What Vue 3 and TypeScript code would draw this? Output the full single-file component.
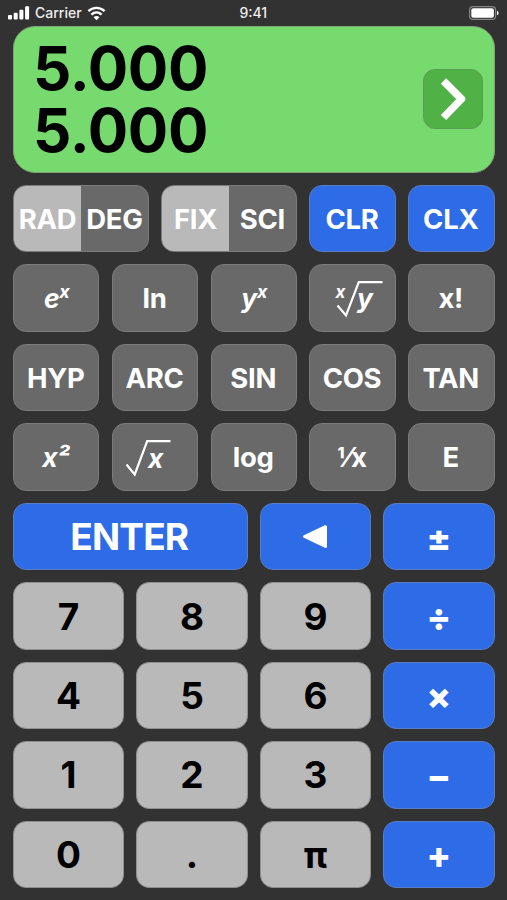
<script setup lang="ts">
import { ref } from 'vue'

type Kind = 'text' | 'power' | 'root' | 'nthroot' | 'back'
interface Key {
  label: string
  tone: 'dark' | 'blue' | 'light'
  kind?: Kind
  sup?: string
  cls?: string
}

const angle = ref('RAD')
const notation = ref('FIX')
const stack = ref(['5.000', '5.000'])

const functionKeys: Key[] = [
  { label: 'e', sup: 'x', tone: 'dark', kind: 'power' },
  { label: 'ln', tone: 'dark' },
  { label: 'y', sup: 'x', tone: 'dark', kind: 'power' },
  { label: 'y', sup: 'x', tone: 'dark', kind: 'nthroot' },
  { label: 'x!', tone: 'dark' },
  { label: 'HYP', tone: 'dark' },
  { label: 'ARC', tone: 'dark' },
  { label: 'SIN', tone: 'dark' },
  { label: 'COS', tone: 'dark' },
  { label: 'TAN', tone: 'dark' },
  { label: 'x²', tone: 'dark', cls: 'square' },
  { label: 'x', tone: 'dark', kind: 'root' },
  { label: 'log', tone: 'dark' },
  { label: '⅟x', tone: 'dark', cls: 'frac' },
  { label: 'E', tone: 'dark' },
]

const numberKeys: Key[] = [
  { label: 'ENTER', tone: 'blue', cls: 'enter' },
  { label: '', tone: 'blue', kind: 'back' },
  { label: '±', tone: 'blue', cls: 'op' },
  { label: '7', tone: 'light' },
  { label: '8', tone: 'light' },
  { label: '9', tone: 'light' },
  { label: '÷', tone: 'blue', cls: 'op' },
  { label: '4', tone: 'light' },
  { label: '5', tone: 'light' },
  { label: '6', tone: 'light' },
  { label: '×', tone: 'blue', cls: 'op' },
  { label: '1', tone: 'light' },
  { label: '2', tone: 'light' },
  { label: '3', tone: 'light' },
  { label: '−', tone: 'blue', cls: 'op' },
  { label: '0', tone: 'light' },
  { label: '.', tone: 'light' },
  { label: 'π', tone: 'light' },
  { label: '+', tone: 'blue', cls: 'op' },
]
</script>

<template>
  <main class="screen">
    <header class="status">
      <div class="carrier">
        <svg class="signal" width="22" height="14" viewBox="0 0 22 14">
          <rect x="0" y="9" width="4" height="4.5" rx="1" />
          <rect x="5.7" y="6.8" width="4" height="6.7" rx="1" />
          <rect x="11.4" y="3.8" width="4" height="9.7" rx="1" />
          <rect x="17.1" y="0.3" width="4" height="13.2" rx="1" />
        </svg>
        <span>Carrier</span>
        <svg class="wifi" width="19" height="15" viewBox="0 0 19 15">
          <path d="M1.400 5.200C6 .8 13 .8 17.600 5.200M4.400 8.600c3-2.800 7.200-2.800 10.200 0" />
          <path class="dot" d="M6.500 11.200c1.700-1.700 4.300-1.700 6 0l-3 3.100z" />
        </svg>
      </div>
      <span class="time">9:41</span>
      <svg class="battery" width="30" height="14" viewBox="0 0 30 14">
        <rect x=".6" y=".6" width="26" height="12.800" rx="3.500" />
        <rect class="charge" x="2.300" y="2.200" width="22.600" height="9.600" rx="2" />
        <path class="tip" d="M28 4.700c2 .8 2 3.800 0 4.600z" />
      </svg>
    </header>

    <section class="display">
      <div class="stack">
        <div v-for="(value, i) in stack" :key="i">{{ value }}</div>
      </div>
      <button class="more" aria-label="More">
        <svg width="58" height="58" viewBox="0 0 58 58">
          <path d="M19.500 11L37.500 29L19.500 47.500" />
        </svg>
      </button>
    </section>

    <section class="modes">
      <div class="toggle">
        <button v-for="m in ['RAD', 'DEG']" :key="m" :class="{ on: angle === m }" @click="angle = m">{{ m }}</button>
      </div>
      <div class="toggle">
        <button v-for="m in ['FIX', 'SCI']" :key="m" :class="{ on: notation === m }" @click="notation = m">{{ m }}</button>
      </div>
      <button class="key blue">CLR</button>
      <button class="key blue">CLX</button>
    </section>

    <section class="functions">
      <button v-for="(k, i) in functionKeys" :key="i" class="key" :class="[k.tone, k.cls]">
        <span v-if="k.kind === 'power'" class="power">{{ k.label }}<span class="sup">{{ k.sup }}</span></span>
        <svg v-else-if="k.kind === 'root'" class="radical" width="86" height="67" viewBox="0 0 86 67">
          <path d="M14.500 40.500L22.700 50.500L35.200 17.200H58.500" />
          <text x="36" y="43.500">{{ k.label }}</text>
        </svg>
        <svg v-else-if="k.kind === 'nthroot'" class="radical" width="86" height="67" viewBox="0 0 86 67">
          <path d="M27.500 40.500L36 50.500L48.800 17.200H72.500" />
          <text x="47" y="43">{{ k.label }}</text>
          <text class="small" x="25.500" y="33">{{ k.sup }}</text>
        </svg>
        <span v-else>{{ k.label }}</span>
      </button>
    </section>

    <section class="numbers">
      <button v-for="(k, i) in numberKeys" :key="i" class="key" :class="[k.tone, k.cls]">
        <svg v-if="k.kind === 'back'" width="28" height="28" viewBox="0 0 28 28">
          <path class="triangle" d="M3.500 13.500L24.500 3.700V23.500Z" />
        </svg>
        <span v-else>{{ k.label }}</span>
      </button>
    </section>
  </main>
</template>

<style>
body {
  background: #323232;
}
</style>

<style scoped>
.screen {
  box-sizing: border-box;
  width: 507px;
  height: 900px;
  overflow: hidden;
  padding: 0 12.500px 0 13px;
  display: flex;
  flex-direction: column;
  gap: 12.300px;
  background: #323232;
  color: #fff;
  font-family: Inter, "Liberation Sans", sans-serif;
  font-weight: 700;
}

button {
  border: 0;
  margin: 0;
  padding: 0;
  background: none;
  color: inherit;
  font: inherit;
  letter-spacing: inherit;
}

.status {
  height: 26px;
  margin: 0 -4px -12.800px -5px;
  display: grid;
  grid-template-columns: 1fr auto 1fr;
  align-items: center;
  font-size: 14px;
  font-weight: 500;
  color: #eee;
}

.carrier {
  display: flex;
  align-items: center;
  gap: 5px;
}

.status span {
  position: relative;
  top: -0.500px;
}

.signal,
.charge,
.tip,
.dot {
  fill: #fff;
}

.wifi path:first-child {
  fill: none;
  stroke: #fff;
  stroke-width: 2.400;
}

.battery {
  justify-self: end;
}

.battery rect:first-child {
  fill: none;
  stroke: #858585;
  stroke-width: 1.200;
}

.display {
  box-sizing: border-box;
  flex: none;
  height: 147.200px;
  border: 1px solid #7da377;
  border-radius: 22px;
  background: #77da6e;
  display: flex;
  align-items: center;
  justify-content: space-between;
  padding: 0 11px 0 19px;
}

.stack {
  color: #000;
  font-size: 60px;
  font-weight: 650;
  line-height: 62px;
  letter-spacing: -0.300px;
}

.more {
  box-sizing: border-box;
  width: 60px;
  height: 60px;
  border: 1px solid #5c9d54;
  border-radius: 12px;
  background: #50b146;
}

.more svg {
  display: block;
}

.more path {
  fill: none;
  stroke: #fff;
  stroke-width: 7.500;
  stroke-linejoin: round;
}

.modes {
  flex: none;
  display: grid;
  grid-template-columns: 135.800px 135.800px 1fr 1fr;
  height: 67.200px;
  gap: 12.300px;
  font-size: 27.500px;
  letter-spacing: -0.300px;
}

.toggle,
.key {
  box-sizing: border-box;
  border: 1px solid #7b7b7b;
  border-radius: 13px;
  background: #696969;
  overflow: hidden;
}

.toggle {
  display: grid;
  grid-template-columns: 1fr 1fr;
}

.toggle .on {
  background: #b9b9b9;
}

.key {
  display: flex;
  align-items: center;
  justify-content: center;
}

.modes .key,
.functions .key {
  padding-right: 1px;
}

.key.blue {
  background: #2d6be7;
  border-color: #5a7cc0;
}

.key.light {
  background: #b9b9b9;
  border-color: #8e8e8e;
  color: #000;
}

.functions,
.numbers {
  flex: none;
  display: grid;
  grid-auto-rows: 67.200px;
  gap: 12.300px;
}

.functions {
  grid-template-columns: repeat(5, 1fr);
  font-size: 27.500px;
  letter-spacing: -0.300px;
}

.numbers {
  grid-template-columns: repeat(4, 1fr);
  font-size: 37px;
}

.enter {
  grid-column: span 2;
  letter-spacing: -0.800px;
}

.enter span {
  padding-right: 2px;
}

.key.op {
  font-size: 36px;
  font-weight: 800;
  padding-top: 2px;
}

.power,
.square,
.radical {
  font-style: italic;
}

.power,
.square {
  font-size: 26.500px;
}

.power {
  padding-left: 2px;
}

.sup {
  font-size: 18px;
  vertical-align: 10px;
  line-height: 0;
}

.radical {
  flex: none;
  margin: -1px -2px -1px -1px;
}

.radical path {
  fill: none;
  stroke: #fff;
  stroke-width: 2.200;
}

.radical text {
  fill: #fff;
  font-size: 26.500px;
}

.radical .small {
  font-size: 17px;
}

.triangle {
  fill: #fff;
  stroke: #fff;
  stroke-width: 3;
  stroke-linejoin: round;
}
</style>
